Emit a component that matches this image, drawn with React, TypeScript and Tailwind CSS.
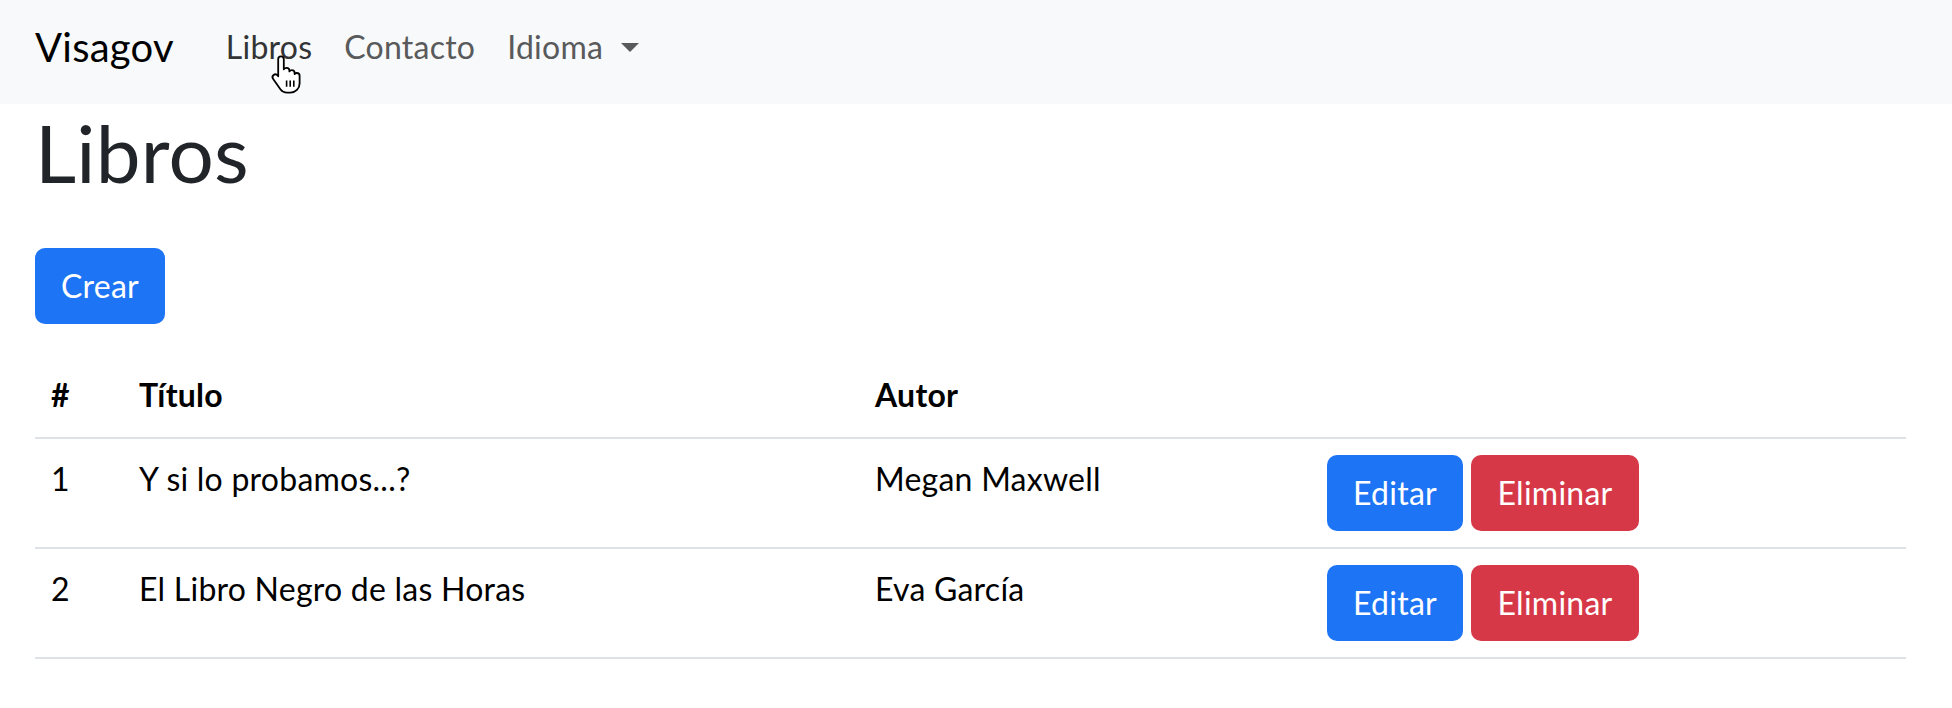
import React from 'react';

const books = [
  { id: 1, title: 'Y si lo probamos...?', author: 'Megan Maxwell' },
  { id: 2, title: 'El Libro Negro de las Horas', author: 'Eva García' },
];

function HandCursor() {
  return (
    <svg
      className="absolute left-[270px] top-[54px] w-[34px] h-[40px]"
      viewBox="0 0 17 20"
      fill="none"
    >
      <path
        d="M5.5 1.2c.8 0 1.4.6 1.4 1.4v5.1c.3-.5.8-.8 1.4-.8.8 0 1.4.6 1.4 1.4v.4c.3-.4.7-.6 1.2-.6.8 0 1.4.6 1.4 1.4v.5c.3-.3.7-.5 1.1-.5.8 0 1.4.6 1.4 1.4v3.8c0 2.6-2 4.6-4.6 4.6H8.6c-1.4 0-2.6-.6-3.4-1.7L1.6 12.5c-.5-.6-.4-1.5.2-2 .6-.5 1.5-.4 2 .2l.3.4V2.6c0-.8.6-1.4 1.4-1.4z"
        fill="white"
        stroke="black"
        strokeWidth="0.9"
        strokeLinejoin="round"
      />
      <path d="M8.3 13.2v3.2M10.1 13.2v3.2M11.9 13.2v3.2" stroke="black" strokeWidth="0.8" />
    </svg>
  );
}

export default function App() {
  return (
    <div className="relative min-h-screen bg-white font-['Lato','Noto_Sans',sans-serif] tracking-[0.015em] text-[#212529]">
      <nav className="h-[104px] bg-[#f8f9fa] flex items-center px-[35px] pb-[10px]">
        <span className="text-[40px] leading-none text-black mr-[36px]">Visagov</span>
        <ul className="flex items-center text-[32px]">
          <li className="px-[16px] text-[#333435]">Libros</li>
          <li className="px-[16px] text-[#595a5b]">Contacto</li>
          <li className="px-[16px] text-[#595a5b] flex items-center">
            Idioma
            <span className="ml-[18px] w-0 h-0 border-x-[9px] border-x-transparent border-t-[9px] border-t-[#595a5b]" />
          </li>
        </ul>
      </nav>
      <HandCursor />

      <main className="pl-[35px] pr-[46px]">
        <h1 className="text-[80px] leading-[96px] font-normal mb-[48px]">Libros</h1>

        <button className="w-[130px] h-[76px] rounded-[10px] bg-[#1d74f5] text-white text-[32px] mb-[33px]">
          Crear
        </button>

        <table className="w-full border-collapse text-black text-[32px] leading-[48px]">
          <thead>
            <tr className="border-b-2 border-[#dee2e6]">
              <th className="w-[88px] px-[16px] pt-[14px] pb-[18px] text-left font-bold">#</th>
              <th className="w-[736px] px-[16px] pt-[14px] pb-[18px] text-left font-bold">Título</th>
              <th className="w-[452px] px-[16px] pt-[14px] pb-[18px] text-left font-bold">Autor</th>
              <th className="p-[16px]"></th>
            </tr>
          </thead>
          <tbody>
            {books.map((b) => (
              <tr key={b.id} className="border-b-2 border-[#dee2e6]">
                <td className="p-[16px] align-top">{b.id}</td>
                <td className="p-[16px] align-top">{b.title}</td>
                <td className="p-[16px] align-top">{b.author}</td>
                <td className="p-[16px] align-top">
                  <div className="flex gap-[8px]">
                    <button className="w-[136px] h-[76px] rounded-[10px] bg-[#1d74f5] text-white">
                      Editar
                    </button>
                    <button className="w-[168px] h-[76px] rounded-[10px] bg-[#d63848] text-white">
                      Eliminar
                    </button>
                  </div>
                </td>
              </tr>
            ))}
          </tbody>
        </table>
      </main>
    </div>
  );
}
